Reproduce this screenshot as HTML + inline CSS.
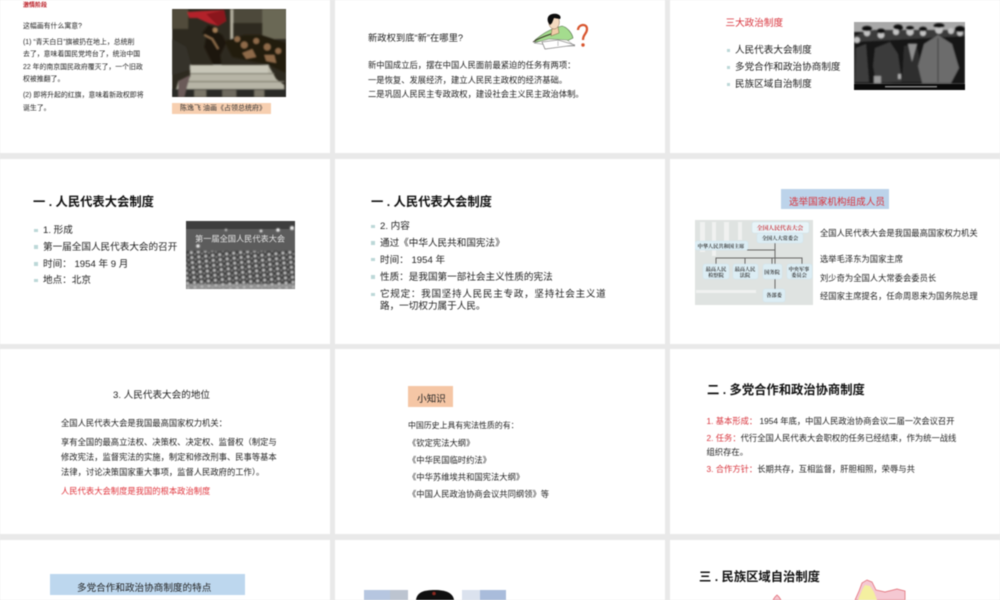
<!DOCTYPE html>
<html lang="zh">
<head>
<meta charset="utf-8">
<style>
html,body{margin:0;padding:0;background:#e9e9e9;}
#p{position:relative;width:1000px;height:600px;overflow:hidden;background:#e9e9e9;filter:blur(0.4px);font-family:"Liberation Sans","Noto Sans CJK SC",sans-serif;color:#222;}
.s{position:absolute;background:#fff;}
.t{position:absolute;white-space:nowrap;line-height:12px;height:12px;transform:translateY(-5px);}
.b{font-weight:700;font-size:12.3px;color:#111;}
.m{font-size:9.6px;}
.n{font-size:8.3px;}
.r{color:#d8333c;}
.d{position:absolute;width:3.5px;height:3.5px;background:#bcd8d8;}
svg{position:absolute;overflow:hidden;}
</style>
</head>
<body>
<div id="p">
<div class="s" style="left:0;top:0;width:330px;height:153px"></div>
<div class="s" style="left:335px;top:0;width:330px;height:153px"></div>
<div class="s" style="left:670px;top:0;width:330px;height:153px"></div>
<div class="s" style="left:0;top:159px;width:330px;height:185px"></div>
<div class="s" style="left:335px;top:159px;width:330px;height:185px"></div>
<div class="s" style="left:670px;top:159px;width:330px;height:185px"></div>
<div class="s" style="left:0;top:349px;width:330px;height:185px"></div>
<div class="s" style="left:335px;top:349px;width:330px;height:185px"></div>
<div class="s" style="left:670px;top:349px;width:330px;height:185px"></div>
<div class="s" style="left:0;top:540px;width:330px;height:60px"></div>
<div class="s" style="left:335px;top:540px;width:330px;height:60px"></div>
<div class="s" style="left:670px;top:540px;width:330px;height:60px"></div>

<!-- Slide 1 -->
<div class="t" style="left:23px;top:4.5px;font-size:6px;font-weight:700;color:#b8141c">激情阶段</div>
<div class="t" style="left:23px;top:25.5px;font-size:6.9px">这幅画有什么寓意?</div>
<div class="t" style="left:23px;top:41.7px;font-size:6.9px">(1) “青天白日”旗被扔在地上，总统削</div>
<div class="t" style="left:23px;top:54px;font-size:6.9px">去了，意味着国民党垮台了，统治中国</div>
<div class="t" style="left:23px;top:66.7px;font-size:6.9px">22 年的南京国民政府覆灭了，一个旧政</div>
<div class="t" style="left:23px;top:79px;font-size:6.9px">权被推翻了。</div>
<div class="t" style="left:23px;top:95px;font-size:6.9px">(2) 即将升起的红旗，意味着新政权即将</div>
<div class="t" style="left:23px;top:107.7px;font-size:6.9px">诞生了。</div>
<svg style="left:171.5px;top:9px" width="114.5" height="88" viewBox="0 0 114 88">
<defs><filter id="f1"><feGaussianBlur stdDeviation="0.8"/></filter></defs>
<rect width="114" height="88" fill="#2e2a20"/>
<g filter="url(#f1)">
<rect x="0" y="0" width="16" height="20" fill="#514c3a"/>
<rect x="58" y="0" width="56" height="14" fill="#4e4a3a"/>
<rect x="90" y="0" width="24" height="30" fill="#6a6854"/>
<rect x="58" y="0" width="3" height="32" fill="#b5b1a0"/>
<path d="M15 3 L30 2 L52 1 L54 12 L46 17 L36 14 L25 9 L17 9Z" fill="#b3242a"/>
<path d="M34 5 L52 1 L54 12 L46 17Z" fill="#8a181c"/>
<path d="M36 16 L30 24 L34 28 L32 38 L40 54 L46 62 L50 62 L48 46 L54 34 L50 26 L44 22 L42 18Z" fill="#1f170e"/>
<circle cx="43" cy="21" r="2.6" fill="#a27b55"/>
<path d="M32 26 L40 30 L46 40" stroke="#8a6a4a" stroke-width="2" fill="none"/>
<path d="M52 32 L72 26 L90 26 L114 34 L114 64 L96 56 L78 52 L60 48Z" fill="#241b10"/>
<g fill="#8e6b48"><circle cx="72" cy="36" r="3.5"/><circle cx="84" cy="32" r="3"/><circle cx="95" cy="38" r="3.5"/><circle cx="65" cy="30" r="3"/><circle cx="106" cy="42" r="3"/><path d="M70 44 L80 40 L84 48 L74 50Z"/><path d="M92 46 L102 46 L104 54 L94 52Z"/></g>
<path d="M0 30 L14 38 L20 60 L0 66Z" fill="#35332a"/>
<path d="M18 56 L96 56 L104 70 L112 76 L112 80 L4 80 L6 72 L18 68Z" fill="#b7b5a6"/>
<rect x="18" y="56" width="78" height="8" fill="#c8c6b8"/>
<rect x="18" y="64" width="84" height="1.2" fill="#807e70"/>
<rect x="6" y="72" width="106" height="1.2" fill="#807e70"/>
<rect x="0" y="80" width="114" height="8" fill="#2c2c26"/>
<path d="M6 72 L18 66 L12 88 L6 88Z" fill="#6a5a58"/>
<rect x="22" y="81" width="12" height="7" fill="#7a7668"/><rect x="50" y="81" width="14" height="7" fill="#6e6b5e"/><rect x="82" y="81" width="10" height="7" fill="#7a7668"/>
</g>
</svg>
<div style="position:absolute;left:172px;top:103px;width:99px;height:10.5px;background:#f7cfb0"></div>
<div class="t" style="left:180px;top:108.3px;font-size:7px;color:#333">陈逸飞 油画《占领总统府》</div>

<!-- Slide 2 -->
<div class="t" style="left:368px;top:37px;font-size:9.3px">新政权到底“新”在哪里?</div>
<div class="t n" style="left:368px;top:64px">新中国成立后，摆在中国人民面前最紧迫的任务有两项：</div>
<div class="t n" style="left:368px;top:78.5px">一是恢复、发展经济，建立人民民主政权的经济基础。</div>
<div class="t n" style="left:368px;top:93px">二是巩固人民民主专政政权，建设社会主义民主政治体制。</div>
<svg style="left:525px;top:5px" width="70" height="50" viewBox="0 0 70 50">
<defs><filter id="f2"><feGaussianBlur stdDeviation="0.35"/></filter></defs>
<g filter="url(#f2)">
<path d="M10 35 C16 30 24 25 30 23 L37 21 C42 22 47 28 48 33 L42 36 L26 35 L10 37Z" fill="#a4dc8e" stroke="#4d6c44" stroke-width="0.6"/>
<path d="M8 37 C14 33 20 31 26 29 L33 27" fill="none" stroke="#3a3026" stroke-width="1"/>
<path d="M9 38 L24 34 L42 35 L50 41 L30 41Z" fill="#fafaf6" stroke="#777" stroke-width="0.5"/>
<path d="M17 37 L33 35 L50 40 L20 44Z" fill="#fff" stroke="#666" stroke-width="0.6"/>
<path d="M33 36 L33 41" stroke="#888" stroke-width=".5"/>
<path d="M27 24 L33 22 L34 28 L26 31Z" fill="#f0cda8" stroke="#6a4a30" stroke-width=".4"/>
<ellipse cx="29" cy="17" rx="5.4" ry="7" fill="#f5dac0" stroke="#6a4a30" stroke-width=".4"/>
<path d="M23 17 C21 10 27 8 32 9 C36 10 36 13 35 14 L29 13 L27 18 L25 20Z" fill="#111"/>
<path d="M53 25 C53 19 62 18 62 24 C62 29 58 29 58 35" fill="none" stroke="#d8552e" stroke-width="2.2"/>
<circle cx="58" cy="40" r="1.7" fill="#d8552e"/>
</g>
</svg>

<!-- Slide 3 -->
<div class="t r" style="left:725.5px;top:23px;font-size:9.6px">三大政治制度</div>
<div class="d" style="left:726.5px;top:48.5px"></div>
<div class="t m" style="left:735px;top:50px">人民代表大会制度</div>
<div class="d" style="left:726.5px;top:65.5px"></div>
<div class="t m" style="left:735px;top:67px">多党合作和政治协商制度</div>
<div class="d" style="left:726.5px;top:82.5px"></div>
<div class="t m" style="left:735px;top:84px">民族区域自治制度</div>
<svg style="left:854px;top:22px" width="111" height="68" viewBox="0 0 111 68">
<defs><filter id="f3"><feGaussianBlur stdDeviation="0.7"/></filter></defs>
<rect width="111" height="68" fill="#a8a8a8"/>
<g filter="url(#f3)">
<rect y="10" width="111" height="52" fill="#181818"/>
<path d="M0 14 L10 10 L20 8 L111 8 L111 14 L0 20Z" fill="#3a3a3a"/>
<g fill="#c4c4c4"><circle cx="3" cy="18" r="3"/><circle cx="13" cy="11" r="3.2"/><circle cx="27" cy="13" r="3.4"/><circle cx="42" cy="10" r="3"/><circle cx="56" cy="10" r="3.6"/><circle cx="69" cy="11" r="3"/><circle cx="85" cy="8" r="3.8"/><circle cx="97" cy="9" r="3"/><circle cx="106" cy="11" r="3"/></g>
<g fill="#0c0c0c"><ellipse cx="13" cy="6.5" rx="5" ry="2.6"/><ellipse cx="27" cy="9" rx="4" ry="2.4"/><ellipse cx="44" cy="5" rx="4.5" ry="2.6"/><ellipse cx="56" cy="6" rx="4" ry="2"/><ellipse cx="46" cy="6" rx="3" ry="2"/><ellipse cx="85" cy="3.5" rx="5.5" ry="2.2"/><ellipse cx="106" cy="7" rx="5" ry="3"/><ellipse cx="69" cy="7" rx="4" ry="2.2"/></g>
<path d="M21 26 L36 20 L44 32 L48 60 L22 61 L19 44Z" fill="#3a3a3a"/>
<path d="M50 24 L62 22 L65 34 L67 60 L48 60Z" fill="#2d2d2d"/>
<path d="M54 22 L58 40 L63 22Z" fill="#8f8f8f"/>
<path d="M70 22 L84 13 L98 22 L105 46 L97 61 L68 61 L64 44Z" fill="#6c6c6c"/>
<path d="M84 16 L84 60" stroke="#3a3a3a" stroke-width="1"/>
<path d="M2 26 L12 22 L15 60 L1 60Z" fill="#3e3e3e"/>
<rect x="20" y="54" width="7" height="7" fill="#9a9a9a"/>
<rect x="44" y="52" width="3" height="5" fill="#aaa"/>
</g>
<rect y="62" width="111" height="6" fill="#0a0a0a"/>
<rect x="31" y="64" width="52" height="1.4" fill="#8c8c8c"/>
</svg>

<!-- Slide 4 -->
<div class="t b" style="left:33px;top:201px">一 . 人民代表大会制度</div>
<div class="d" style="left:34px;top:228.5px"></div>
<div class="t m" style="left:43px;top:230px">1. 形成</div>
<div class="d" style="left:34px;top:245px"></div>
<div class="t m" style="left:43px;top:246.7px">第一届全国人民代表大会的召开</div>
<div class="d" style="left:34px;top:262px"></div>
<div class="t m" style="left:43px;top:263.5px">时间： 1954 年 9 月</div>
<div class="d" style="left:34px;top:278.5px"></div>
<div class="t m" style="left:43px;top:280px">地点：北京</div>
<svg style="left:186px;top:221px" width="109" height="68" viewBox="0 0 109 68">
<defs><filter id="f4"><feGaussianBlur stdDeviation="0.9"/></filter><pattern id="pp" width="7" height="5" patternUnits="userSpaceOnUse" patternTransform="rotate(-6)"><rect width="7" height="5" fill="#3c3c3c"/><circle cx="2" cy="2" r="1.5" fill="#c4c4c4"/><circle cx="5.5" cy="4" r="1.1" fill="#8a8a8a"/></pattern></defs>
<rect width="109" height="68" fill="#5c5c5c"/>
<rect width="109" height="8" fill="#3e3e3e"/>
<g filter="url(#f4)"><rect y="30" width="109" height="38" fill="url(#pp)"/>
<circle cx="12" cy="25" r="1.8" fill="#f0f0f0"/><circle cx="92" cy="9" r="1.8" fill="#f0f0f0"/><circle cx="75" cy="10" r="1.4" fill="#eee"/><circle cx="106" cy="7" r="2" fill="#f0f0f0"/><circle cx="40" cy="9" r="1.2" fill="#ccc"/>
<rect y="63" width="109" height="5" fill="#b4b4b4" opacity=".7"/></g>
<text x="9" y="20.5" font-size="8.2" fill="#e4e4e4" font-family="Liberation Sans,Noto Sans CJK SC,sans-serif">第一届全国人民代表大会</text>
</svg>

<!-- Slide 5 -->
<div class="t b" style="left:371px;top:201px">一 . 人民代表大会制度</div>
<div class="d" style="left:371px;top:224.5px"></div>
<div class="t m" style="left:380px;top:226px">2. 内容</div>
<div class="d" style="left:371px;top:241px"></div>
<div class="t m" style="left:380px;top:242.5px">通过《中华人民共和国宪法》</div>
<div class="d" style="left:371px;top:257.5px"></div>
<div class="t m" style="left:380px;top:259.5px">时间： 1954 年</div>
<div class="d" style="left:371px;top:275px"></div>
<div class="t m" style="left:380px;top:276.5px">性质：是我国第一部社会主义性质的宪法</div>
<div class="d" style="left:371px;top:292.5px"></div>
<div class="t m" style="left:380px;top:294px;letter-spacing:.7px">它规定：我国坚持人民民主专政，坚持社会主义道</div>
<div class="t m" style="left:380px;top:306px">路，一切权力属于人民。</div>

<!-- Slide 6 -->
<div style="position:absolute;left:781px;top:189px;width:108px;height:20px;background:#bcd3ea"></div>
<div class="t m r" style="left:789px;top:202px">选举国家机构组成人员</div>
<svg style="left:695px;top:220px" width="118" height="85" viewBox="695 220 118 85">
<rect x="695" y="220" width="118" height="85" fill="#dfe3e1"/>
<g fill="#f0f1f0"><rect x="700" y="222" width="5" height="30"/><rect x="712" y="222" width="4" height="34"/><rect x="724" y="222" width="5" height="28"/><rect x="738" y="222" width="4" height="18"/><rect x="696" y="290" width="60" height="3"/></g>
<g fill="none" stroke="#666" stroke-width="1"><path d="M775 243V290M747 250H775M716 264V258H802V264M745 258V264M772 258V264"/></g>
<g fill="#dcedf4" stroke="#cfe3ec" stroke-width=".5">
<rect x="752" y="222" width="57" height="11" rx="2" fill="#e8f4f8"/>
<rect x="757" y="233" width="46" height="10" rx="2"/>
<rect x="695" y="241" width="53" height="9" rx="2"/>
<rect x="703" y="264" width="26" height="15" rx="2"/>
<rect x="733" y="264" width="25" height="15" rx="2"/>
<rect x="763" y="264" width="19" height="15" rx="2"/>
<rect x="787" y="264" width="25" height="15" rx="2"/>
<rect x="763" y="289" width="22" height="13" rx="2"/>
</g>
<g font-family="Liberation Serif,Noto Serif CJK SC,serif" font-size="5.2" fill="#333" font-weight="700" text-anchor="middle">
<text x="780" y="230" fill="#c8323a" font-size="5.8">全国人民代表大会</text>
<text x="780" y="240">全国人大常委会</text>
<text x="721" y="248">中华人民共和国主席</text>
<text x="716" y="271">最高人民</text><text x="716" y="277">检察院</text>
<text x="745" y="271">最高人民</text><text x="745" y="277">法院</text>
<text x="772" y="274">国务院</text>
<text x="799" y="271">中央军事</text><text x="799" y="277">委员会</text>
<text x="774" y="297">各部委</text>
</g>
</svg>
<div class="t n" style="left:820px;top:232px">全国人民代表大会是我国最高国家权力机关</div>
<div class="t n" style="left:820px;top:258px">选举毛泽东为国家主席</div>
<div class="t n" style="left:820px;top:277px">刘少奇为全国人大常委会委员长</div>
<div class="t n" style="left:820px;top:295px">经国家主席提名，任命周恩来为国务院总理</div>

<!-- Slide 7 -->
<div class="t m" style="left:113px;top:394.5px">3. 人民代表大会的地位</div>
<div class="t n" style="left:61px;top:422px">全国人民代表大会是我国最高国家权力机关：</div>
<div class="t n" style="left:61px;top:441px">享有全国的最高立法权、决策权、决定权、监督权（制定与</div>
<div class="t n" style="left:61px;top:456px">修改宪法，监督宪法的实施，制定和修改刑事、民事等基本</div>
<div class="t n" style="left:61px;top:471px">法律，讨论决策国家重大事项，监督人民政府的工作）。</div>
<div class="t n" style="left:61px;top:490px;color:#e0343c">人民代表大会制度是我国的根本政治制度</div>

<!-- Slide 8 -->
<div style="position:absolute;left:408px;top:386px;width:45px;height:20.5px;background:#f5c6a5"></div>
<div class="t m" style="left:417px;top:399px">小知识</div>
<div class="t" style="left:408px;top:425px;font-size:7.9px">中国历史上具有宪法性质的有：</div>
<div class="t n" style="left:408px;top:442px">《钦定宪法大纲》</div>
<div class="t n" style="left:408px;top:459px">《中华民国临时约法》</div>
<div class="t n" style="left:408px;top:476px">《中华苏维埃共和国宪法大纲》</div>
<div class="t n" style="left:408px;top:493px">《中国人民政治协商会议共同纲领》等</div>

<!-- Slide 9 -->
<div class="t b" style="left:707px;top:389px">二 . 多党合作和政治协商制度</div>
<div class="t n" style="left:706.5px;top:420px"><span class="r">1. 基本形成：</span> 1954 年底，中国人民政治协商会议二届一次会议召开</div>
<div class="t n" style="left:706.5px;top:436.8px"><span class="r">2. 任务：</span>代行全国人民代表大会职权的任务已经结束，作为统一战线</div>
<div class="t n" style="left:706.5px;top:451px">组织存在。</div>
<div class="t n" style="left:706.5px;top:468px"><span class="r">3. 合作方针：</span>长期共存，互相监督，肝胆相照，荣辱与共</div>

<!-- Slide 10 -->
<div style="position:absolute;left:50px;top:574px;width:195px;height:20.5px;background:#bdd7ee"></div>
<div class="t m" style="left:77px;top:587.5px">多党合作和政治协商制度的特点</div>

<!-- Slide 11 -->
<svg style="left:364px;top:590px" width="142" height="10" viewBox="0 0 142 10">
<rect width="142" height="10" fill="#c9d4e6"/>
<rect x="0" y="0" width="26" height="10" fill="#b6c6e0"/>
<rect x="26" y="0" width="18" height="10" fill="#bcc4d0"/>
<rect x="44" y="0" width="54" height="10" fill="#fff"/>
<rect x="98" y="0" width="18" height="10" fill="#dbe2ee"/>
<rect x="116" y="0" width="26" height="10" fill="#a9bcdb"/>
<path d="M52 10 C53 2 60 0 71 0 C82 0 89 3 90 10Z" fill="#111"/>
<circle cx="70" cy="3.5" r="1.8" fill="#8a2820"/>
</svg>

<!-- Slide 12 -->
<div class="t b" style="left:699px;top:576px">三 . 民族区域自治制度</div>
<svg style="left:770px;top:575px" width="140" height="25" viewBox="770 575 140 25">
<path d="M855 600 L859 591 L862 583 L867 580 L872 582 L876 590 L885 592 L897 589 L905 591 L905 600Z" fill="#f5c8d2" stroke="#e0606a" stroke-width=".7"/>
<path d="M858 600 L862 590 L865 585 L870 586 L874 592 L877 600Z" fill="#f4efa0"/>
<path d="M773 600 L775 597 L777 595 L779 597 L781 600Z" fill="#f5c8d2" stroke="#e0606a" stroke-width=".7"/>
</svg>
</div>
</body>
</html>
